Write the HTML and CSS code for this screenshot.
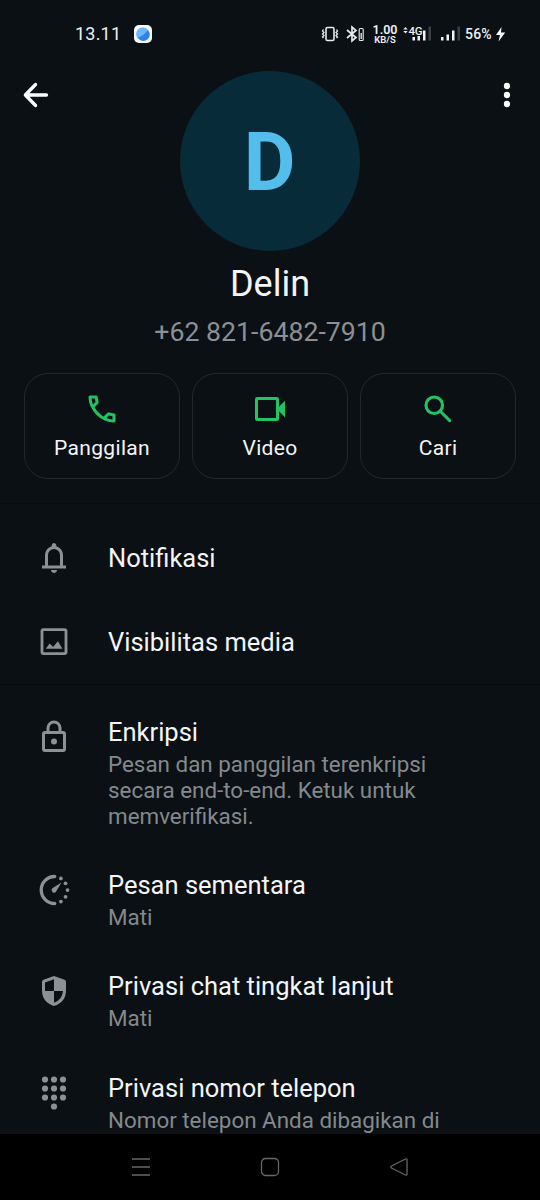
FILE: index.html
```html
<!DOCTYPE html>
<html lang="id">
<head>
<meta charset="utf-8">
<title>Info kontak</title>
<link rel="stylesheet" href="styles.css">
</head>
<body>
<div class="screen">
  <header class="status">
    <span class="clock">13.11</span>
    <svg class="app-badge" width="18" height="18" viewBox="0 0 18 18"><rect width="18" height="18" rx="5" fill="#f4f9ff"/><circle cx="9.3" cy="9.5" r="6.500" fill="#2f82e8"/><path d="M3.500 13A6.500 6.500 0 0 1 14 5Q10 10.500 3.500 13z" fill="#6bb8fa"/></svg>
    <div class="status-right">
      <svg class="vibrate" width="18" height="18" viewBox="0 0 18 18" fill="none" stroke="#e8ebec" stroke-width="1.600"><rect x="5" y="2.500" width="8" height="13" rx="1.500"/><path d="M2.500 4.500l-1 1.500 1.500 1.500-1.500 1.500 1.500 1.500-1.500 1.500 1 1M15.500 4.500l1 1.500-1.500 1.500 1.500 1.500-1.500 1.500 1.500 1.500-1 1" stroke-width="1.300"/></svg>
      <svg class="bluetooth" width="19" height="18" viewBox="0 0 19 18" fill="none" stroke="#e8ebec" stroke-width="1.700"><path d="M1 5l9 7.500-4 3.500V2l4 3.500L1 13"/><rect x="13.200" y="3.500" width="4" height="12" rx="1" stroke-width="1.100"/><path d="M15.200 8v6" stroke-width="1.300"/></svg>
      <div class="speed"><b>1.00</b><b class="unit">KB/S</b></div>
      <svg class="signal" width="30" height="18" viewBox="0 0 30 18"><path d="M.3 4.500L2.500 2l2.200 2.500zM.3 6L2.500 8.500 4.700 6z" fill="#e8ebec"/><text class="net" x="5.500" y="9.500">4G</text><path d="M9.500 12H12v3.500H9.500zM14.500 11H17v4.500h-2.500zM20 5.500h2.500v10H20z" fill="#f1f3f4"/><path d="M25.500 1.500H28v14h-2.500z" fill="#3c4144"/></svg>
      <svg class="signal-two" width="20" height="18" viewBox="0 0 20 18"><path d="M0 12h2.500v3.500H0zM5.500 9.500H8v6H5.500zM11 5.500h2.500v10H11z" fill="#f1f3f4"/><path d="M16.500 1.500H19v14h-2.500z" fill="#3c4144"/></svg>
      <span class="battery">56%</span>
      <svg width="11" height="18" viewBox="0 0 11 18"><path d="M6.500 2L1 10h4L3.500 16.500 10.200 7.500H6z" fill="#fff"/></svg>
    </div>
  </header>

  <section class="profile">
    <svg class="tool" width="36" height="36" viewBox="0 0 24 24" fill="none" stroke="#fff" stroke-width="2.200" stroke-linecap="round" stroke-linejoin="round"><path d="M19 12H5M11.700 5L4.900 12l6.800 7"/></svg>
    <div class="avatar"><span>D</span></div>
    <svg class="tool more" width="36" height="36" viewBox="0 0 24 24" fill="#fff"><circle cx="12" cy="6" r="2.100"/><circle cx="12" cy="12" r="2.100"/><circle cx="12" cy="18" r="2.100"/></svg>
  </section>
  <h1 class="name">Delin</h1>
  <p class="phone">+62 821-6482-7910</p>

  <nav class="actions">
    <div class="action">
      <svg class="icon" viewBox="0 0 24 24"><path d="M19.950 21q-3.125 0-6.175-1.362t-5.550-3.863-3.862-5.550T3 4.050q0-.45.3-.75t.75-.3H8.100q.35 0 .625.238t.325.562l.65 3.500q.05.4-.025.675T9.400 8.450L6.975 10.900q.5.925 1.187 1.787t1.513 1.663q.775.775 1.625 1.438T13.100 17l2.350-2.350q.225-.225.588-.337t.712-.063l3.450.7q.35.1.575.363T21 15.900v4.050q0 .45-.3.750t-.750.300M6.025 9l1.650-1.650L7.250 5H5.025q.125 1.025.35 2.025T6.025 9m8.950 8.950q.975.425 1.988.675T19 18.950v-2.200l-2.350-.475z"/></svg>
      <span>Panggilan</span>
    </div>
    <div class="action">
      <svg class="icon" viewBox="0 0 24 24"><path fill-rule="evenodd" d="M3.500 4h13A1.500 1.500 0 0 1 18 5.500v5l4-4v11l-4-4v5a1.500 1.500 0 0 1-1.500 1.500h-13A1.500 1.500 0 0 1 2 18.500v-13A1.500 1.500 0 0 1 3.500 4zM4 6v12h12V6z"/></svg>
      <span>Video</span>
    </div>
    <div class="action">
      <svg class="icon" viewBox="0 0 24 24"><g fill="none" stroke="currentColor" stroke-width="2.100"><circle cx="9.500" cy="9.500" r="5.500"/><path d="M13.500 13.500l6.300 6.300" stroke-linecap="round"/></g></svg>
      <span>Cari</span>
    </div>
  </nav>

  <section class="group media">
    <div class="row">
      <svg class="icon" viewBox="0 0 24 24"><path d="M4 19v-2h2v-7q0-2.075 1.250-3.688T10.500 4.200v-.7q0-.625.438-1.062T12 2t1.063.438T13.500 3.500v.7q2 .5 3.250 2.113T18 10v7h2v2zM12 22q-.825 0-1.412-.587T10 20h4q0 .825-.587 1.413T12 22m-4-5h8v-7q0-1.650-1.175-2.825T12 6 9.175 7.175 8 10z"/></svg>
      <h2>Notifikasi</h2>
    </div>
    <div class="row">
      <svg class="icon" viewBox="0 0 24 24"><rect x="4" y="3.700" width="16" height="16" rx="1" fill="none" stroke="currentColor" stroke-width="1.900"/><path d="M6.500 16.500l2.600-3.500 2.300 2.400 3.200-3.900 3 5z"/></svg>
      <h2>Visibilitas media</h2>
    </div>
  </section>

  <section class="group details">
    <div class="row">
      <svg class="icon" viewBox="0 0 24 24"><rect x="5" y="9" width="14" height="12" rx="1" fill="none" stroke="currentColor" stroke-width="2"/><path d="M8 9V6a4 4 0 0 1 8 0v3" fill="none" stroke="currentColor" stroke-width="2"/><circle cx="12" cy="15" r="2"/></svg>
      <div><h2>Enkripsi</h2><p>Pesan dan panggilan terenkripsi<br>secara end-to-end. Ketuk untuk<br>memverifikasi.</p></div>
    </div>
    <div class="row">
      <svg class="icon" viewBox="0 0 24 24"><path d="M12.500 3A9 9 0 1 0 12.500 21" fill="none" stroke="currentColor" stroke-width="2.200" stroke-linecap="round"/><path d="M10.900 10.900L16.500 7.300Q17 7 16.700 7.500L13.300 13.200A1.600 1.600 0 1 1 10.900 10.900z"/><circle cx="16.600" cy="4.300" r="1.250"/><circle cx="19.700" cy="7.500" r="1.250"/><circle cx="21" cy="12" r="1.250"/><circle cx="19.700" cy="16.500" r="1.250"/><circle cx="16.600" cy="19.700" r="1.250"/></svg>
      <div><h2>Pesan sementara</h2><p>Mati</p></div>
    </div>
    <div class="row">
      <svg class="icon" viewBox="0 0 24 24"><path fill-rule="evenodd" d="M12 2l7 2.500q1 .4 1 1.500v5.500Q20 19.500 12 22 4 19.500 4 11.500V6q0-1.100 1-1.500zM12 4.100L6 6.300V12h6zM12 12v7.900q5.500-2 6-7.900z"/></svg>
      <div><h2>Privasi chat tingkat lanjut</h2><p>Mati</p></div>
    </div>
    <div class="row">
      <svg class="icon" viewBox="0 0 24 24"><circle cx="6" cy="3" r="2.050"/><circle cx="12" cy="3" r="2.050"/><circle cx="18" cy="3" r="2.050"/><circle cx="6" cy="9" r="2.050"/><circle cx="12" cy="9" r="2.050"/><circle cx="18" cy="9" r="2.050"/><circle cx="6" cy="15" r="2.050"/><circle cx="12" cy="15" r="2.050"/><circle cx="18" cy="15" r="2.050"/><circle cx="12" cy="21" r="2.050"/></svg>
      <div><h2>Privasi nomor telepon</h2><p>Nomor telepon Anda dibagikan di</p></div>
    </div>
  </section>

  <footer class="navbar">
    <svg width="20" height="20" viewBox="0 0 20 20"><path d="M1 2h18M1 10h18M1 18h18"/></svg>
    <svg width="20" height="20" viewBox="0 0 20 20"><rect x="1.500" y="1.500" width="17" height="17" rx="4"/></svg>
    <svg width="20" height="20" viewBox="0 0 20 20"><path d="M16.500 2L2.500 9q-1.500 1 0 2l14 7q1.500.5 1.500-1V3q0-1.500-1.500-1z"/></svg>
  </footer>
</div>
</body>
</html>
```
FILE: styles.css
```css
* { box-sizing: border-box; }
body { margin: 0; background: #0b1014; }
h1, h2, p { margin: 0; font-weight: 400; }
svg { display: block; flex: none; }
.screen {
  display: flex;
  flex-direction: column;
  width: 540px;
  height: 1200px;
  overflow: hidden;
  background: #0b1014;
  color: #f3f5f6;
  font-family: Roboto, "Noto Sans", sans-serif;
}
.status {
  display: flex;
  flex: none;
  align-items: center;
  height: 71px;
  padding: 0 34px 4px 75px;
  color: #eceff0;
}
.clock { width: 59px; font: 18px/24px Roboto, sans-serif; letter-spacing: .2px; }
.status-right { display: flex; align-items: center; margin-left: auto; }
.vibrate { margin-right: 7px; }
.bluetooth { margin-right: 7px; }
.speed {
  display: flex;
  flex-direction: column;
  align-items: center;
  width: 26px;
  margin-right: 5px;
  font: 12.500px/11px Roboto, sans-serif;
}
.speed b { font-weight: 600; }
.speed .unit { font-size: 9.500px; line-height: 9px; }
.net { font: 500 11.500px Roboto, sans-serif; letter-spacing: -.3px; fill: #eceff0; }
.signal { margin-right: 8px; }
.signal-two { margin-right: 4px; }
.battery { width: 30px; font: 500 14px/18px Roboto, sans-serif; letter-spacing: .2px; }
.profile {
  display: flex;
  flex: none;
  justify-content: space-between;
  height: 180px;
  padding: 0 15px 0 18px;
}
.tool { margin-top: 6px; }
.avatar {
  display: flex;
  align-items: center;
  justify-content: center;
  width: 180px;
  height: 180px;
  padding-top: 2px;
  margin-left: -3px;
  border-radius: 50%;
  background: #082b3a;
  color: #53bdeb;
  font-size: 82px;
  font-weight: 700;
  line-height: 96px;
}
.avatar span { transform: scaleX(.97); }
.name { margin-top: 12px; font-size: 36px; line-height: 42px; text-align: center; }
.phone { margin-top: 11px; color: #8b9094; font-size: 26.700px; line-height: 32px; text-align: center; }
.actions {
  display: grid;
  flex: none;
  grid-template-columns: repeat(3, 1fr);
  gap: 12px;
  height: 106px;
  margin: 25px 24px 24px;
}
.action {
  display: flex;
  flex-direction: column;
  align-items: center;
  padding-top: 17px;
  border: 1.500px solid #22282b;
  border-radius: 24px;
  font-size: 21px;
  line-height: 26px;
  letter-spacing: .35px;
}
.action .icon { margin-bottom: 8px; color: #25c265; }
.icon { width: 36px; height: 36px; fill: currentColor; }
.group { flex: none; border-top: 1px solid #070b0e; }
.row { display: flex; gap: 36px; padding-left: 36px; }
.row > .icon { color: #8b9195; }
.row h2 { font-size: 25.500px; line-height: 30px; }
.row p { margin-top: 4px; color: #83898d; font-size: 22.400px; line-height: 26.200px; }
.media { height: 181px; padding-top: 12px; }
.media .row { align-items: center; height: 84px; }
.details {
  display: flex;
  flex: 1;
  flex-direction: column;
  gap: 41px;
  min-height: 0;
  overflow: hidden;
  padding-top: 31.500px;
}
.details .icon { margin-top: 2px; }
.navbar {
  display: flex;
  flex: none;
  align-items: center;
  justify-content: space-between;
  height: 66px;
  padding: 0 131px;
  background: #000;
}
.navbar svg { fill: none; stroke: #64686a; stroke-width: 1.300; }
```
